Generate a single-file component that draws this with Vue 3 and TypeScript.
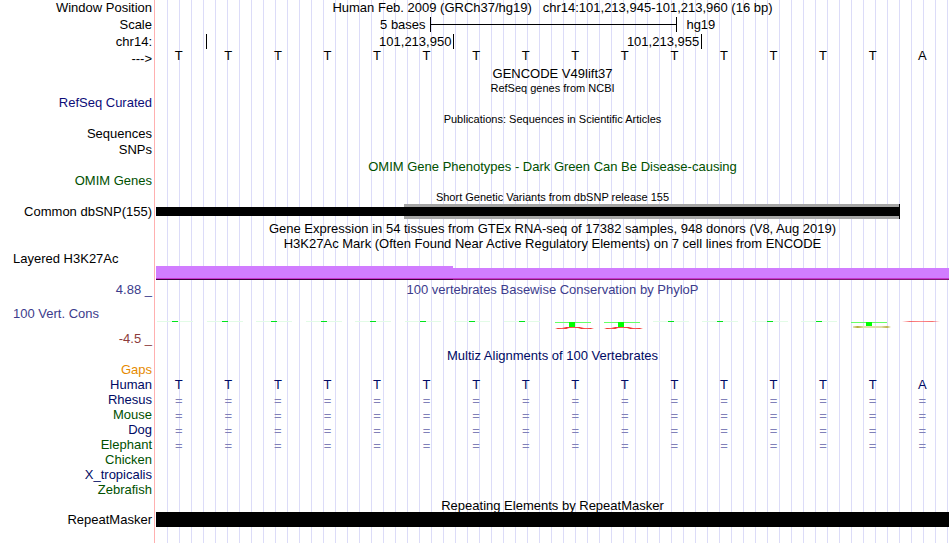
<script setup lang="ts">
type Kind = 'title' | 'label' | 'scale' | 'ruler' | 'bases' | 'snp' | 'layered' | 'phylop' | 'repeat'

interface Row {
  kind: Kind
  height: 14 | 15 | 16 | 17 | 33
  label?: string
  title?: string
  tone?: string
  labelTone?: string
  small?: boolean
  align?: 'low' | 'high'
  left?: boolean
  cells?: string[]
}

const sequence: string[] = [...'TTTTTTTTTTTTTTTA']
const aligned: string[] = sequence.map(() => '=')

const rows: Row[] = [
  { kind: 'title', height: 16, label: 'Window Position', title: 'Human Feb. 2009 (GRCh37/hg19)   chr14:101,213,945-101,213,960 (16 bp)', align: 'high' },
  { kind: 'scale', height: 17, label: 'Scale' },
  { kind: 'ruler', height: 17, label: 'chr14:' },
  { kind: 'bases', height: 16, label: '--->', tone: 'lead', cells: sequence },
  { kind: 'title', height: 15, title: 'GENCODE V49lift37' },
  { kind: 'title', height: 14, title: 'RefSeq genes from NCBI', small: true },
  { kind: 'label', height: 17, label: 'RefSeq Curated', labelTone: 'refseq', align: 'high' },
  { kind: 'title', height: 14, title: 'Publications: Sequences in Scientific Articles', small: true },
  { kind: 'label', height: 15, label: 'Sequences' },
  { kind: 'label', height: 17, label: 'SNPs' },
  { kind: 'title', height: 15, title: 'OMIM Gene Phenotypes - Dark Green Can Be Disease-causing', tone: 'green', align: 'low' },
  { kind: 'label', height: 17, label: 'OMIM Genes', labelTone: 'green', align: 'high' },
  { kind: 'title', height: 14, title: 'Short Genetic Variants from dbSNP release 155', small: true },
  { kind: 'snp', height: 15, label: 'Common dbSNP(155)' },
  { kind: 'title', height: 17, title: 'Gene Expression in 54 tissues from GTEx RNA-seq of 17382 samples, 948 donors (V8, Aug 2019)', align: 'low' },
  { kind: 'title', height: 15, title: 'H3K27Ac Mark (Often Found Near Active Regulatory Elements) on 7 cell lines from ENCODE' },
  { kind: 'label', height: 15, label: 'Layered H3K27Ac', left: true },
  { kind: 'layered', height: 15 },
  { kind: 'title', height: 16, label: '4.88 _', title: '100 vertebrates Basewise Conservation by PhyloP', tone: 'violet', labelTone: 'violet' },
  { kind: 'phylop', height: 33, label: '100 Vert. Cons', labelTone: 'violet', left: true },
  { kind: 'label', height: 17, label: '-4.5 _', labelTone: 'maroon' },
  { kind: 'title', height: 15, title: 'Multiz Alignments of 100 Vertebrates', tone: 'navy', align: 'low' },
  { kind: 'label', height: 15, label: 'Gaps', labelTone: 'orange' },
  { kind: 'bases', height: 15, label: 'Human', labelTone: 'navy', tone: 'navy', cells: sequence },
  { kind: 'bases', height: 15, label: 'Rhesus', labelTone: 'navy', tone: 'match', cells: aligned },
  { kind: 'bases', height: 15, label: 'Mouse', labelTone: 'green', tone: 'match', cells: aligned },
  { kind: 'bases', height: 15, label: 'Dog', labelTone: 'navy', tone: 'match', cells: aligned },
  { kind: 'bases', height: 15, label: 'Elephant', labelTone: 'green', tone: 'match', cells: aligned },
  { kind: 'label', height: 15, label: 'Chicken', labelTone: 'green' },
  { kind: 'label', height: 15, label: 'X_tropicalis', labelTone: 'navy' },
  { kind: 'label', height: 15, label: 'Zebrafish', labelTone: 'green' },
  { kind: 'title', height: 15, title: 'Repeating Elements by RepeatMasker', align: 'low' },
  { kind: 'repeat', height: 15, label: 'RepeatMasker' },
]

const baseWidth = 793 / 16
const baseX = (index: number): number => Math.round(index * baseWidth)
const neutral: number[] = [0, 1, 2, 3, 4, 5, 6, 7, 10, 11, 12, 13]
const negative: number[] = [8, 9]
</script>

<template>
  <main class="browser">
    <section v-for="(row, i) in rows" :key="i" class="row" :class="['h' + row.height, row.align]">
      <div class="label" :class="[row.labelTone, { left: row.left }]">{{ row.label }}</div>

      <div v-if="row.kind === 'title'" class="title" :class="[row.tone, { small: row.small }]">{{ row.title }}</div>

      <div v-else-if="row.kind === 'scale'" class="scale">
        <span class="scale-size">5 bases</span>
        <span class="scale-bar"></span>
        <span class="scale-name">hg19</span>
      </div>

      <div v-else-if="row.kind === 'ruler'" class="ruler">
        <span class="tick"></span>
        <span class="tick">101,213,950</span>
        <span class="tick">101,213,955</span>
      </div>

      <div v-else-if="row.kind === 'bases'" class="bases" :class="row.tone">
        <span v-for="(cell, c) in row.cells" :key="c">{{ cell }}</span>
      </div>

      <svg v-else-if="row.kind === 'snp'" class="plot" viewBox="0 0 793 15" preserveAspectRatio="none" shape-rendering="crispEdges">
        <rect x="248" y="0" width="496" height="15" fill="#a5a5a5" />
        <rect x="0" y="3" width="744" height="9" />
        <rect x="743" y="0" width="1" height="15" />
      </svg>

      <svg v-else-if="row.kind === 'layered'" class="plot" viewBox="0 0 793 15" preserveAspectRatio="none" shape-rendering="crispEdges">
        <path d="M0 0H297V2H793V12H0Z" fill="#d17dff" />
        <rect x="0" y="12" width="793" height="1" fill="#c936cf" />
        <rect x="0" y="13" width="297" height="1" fill="#3f003f" />
        <rect x="297" y="13" width="496" height="1" fill="#7d1c72" />
      </svg>

      <svg v-else-if="row.kind === 'phylop'" class="plot" viewBox="0 0 793 33" preserveAspectRatio="none">
        <defs>
          <linearGradient id="fade-red">
            <stop offset="0" stop-color="#ff4040" stop-opacity="0" />
            <stop offset="0.2" stop-color="#f03030" />
            <stop offset="0.5" stop-color="#ff5a5a" />
            <stop offset="0.8" stop-color="#f03030" />
            <stop offset="1" stop-color="#ff4040" stop-opacity="0" />
          </linearGradient>
          <linearGradient id="fade-olive">
            <stop offset="0" stop-color="#bdb850" stop-opacity="0.4" />
            <stop offset="0.12" stop-color="#b5b03c" />
            <stop offset="0.28" stop-color="#e4e0b0" />
            <stop offset="0.75" stop-color="#e0dca8" />
            <stop offset="0.9" stop-color="#bdb34c" />
            <stop offset="1" stop-color="#bdb850" stop-opacity="0" />
          </linearGradient>
        </defs>
        <g v-for="n in neutral" :key="n" shape-rendering="crispEdges">
          <rect :x="baseX(n) + 1" y="24" width="36" height="1" fill="#e2fbe6" />
          <rect :x="baseX(n) + 16" y="24" width="6" height="1" fill="#00e51a" />
        </g>
        <g v-for="n in negative" :key="n" :transform="`translate(${baseX(n)} 0)`">
          <rect x="2" y="25" width="36" height="1" fill="#66ff66" />
          <rect x="2" y="31" width="14" height="1" fill="url(#fade-red)" />
          <rect x="9" y="30" width="22" height="1" fill="url(#fade-red)" />
          <rect x="25" y="31" width="16" height="1" fill="url(#fade-red)" />
          <rect x="16" y="25" width="6" height="5" fill="#00ff00" />
        </g>
        <rect x="695" y="25" width="36" height="1" fill="#66ff66" />
        <rect x="710" y="25" width="6" height="4" fill="#00ff00" />
        <rect x="697" y="29" width="38" height="2" fill="url(#fade-olive)" />
        <rect x="746" y="24" width="38" height="1" fill="url(#fade-red)" opacity="0.7" />
      </svg>

      <div v-else-if="row.kind === 'repeat'" class="plot solid"></div>
    </section>
  </main>
</template>

<style>
body {
  margin: 0;
  background: #fff;
}
</style>

<style scoped>
.browser {
  box-sizing: border-box;
  min-height: 100vh;
  overflow: hidden;
  color: #000;
  font: 13px/15px "Liberation Sans", Arial, Helvetica, sans-serif;
  background:
    linear-gradient(#ffb0b0, #ffb0b0) 154px 0 / 1px 100% no-repeat,
    repeating-linear-gradient(to right, transparent 0 11px, #dcdcf8 11px 12px) 156px 0 / 100% 100% no-repeat;
}

.row {
  display: grid;
  grid-template-columns: 156px minmax(0, 1fr);
  align-items: center;
  box-sizing: border-box;
  padding-right: 1px;
  white-space: pre;
}

.h14 { height: 14px; }
.h15 { height: 15px; }
.h16 { height: 16px; }
.h17 { height: 17px; }
.h33 { height: 33px; }
.low { padding-top: 1px; }
.low.h17 { padding-top: 2px; }
.high { align-items: start; }

.label {
  padding-right: 4px;
  text-align: right;
}

.label.left {
  padding-left: 13px;
  text-align: left;
}

.title { text-align: center; }
.small { font-size: 11px; }

.refseq { color: #0c0c78; }
.green { color: #005000; }
.violet { color: #3c3c8c; }
.maroon { color: #8c3c3c; }
.navy { color: #000a64; }
.orange { color: #e68a00; }

.scale {
  display: grid;
  grid-template-columns: 11fr 10fr 11fr;
  align-items: center;
  margin: 0 -1px 0 1px;
}

.scale-size {
  padding-right: 4px;
  text-align: right;
}

.scale-bar {
  height: 15px;
  border: solid #000;
  border-width: 0 1px;
  background: linear-gradient(#000, #000) center / 100% 1px no-repeat;
}

.scale-name { padding-left: 9px; }

.ruler {
  display: grid;
  grid-template-columns: 1fr 5fr 5fr 5fr;
  margin: 0 -1px 0 1px;
}

.tick {
  height: 15px;
  padding-right: 2px;
  border-right: 1px solid #000;
  text-align: right;
}

.bases {
  display: grid;
  grid-template-columns: repeat(16, 1fr);
  margin: 0 2px 0 -2px;
  text-align: center;
}

.lead {
  align-self: start;
  line-height: 12px;
}

.match {
  margin-top: 1px;
  margin-bottom: -1px;
  color: #8080b8;
}

.plot {
  display: block;
  width: 100%;
  height: 100%;
}

.solid { background: #000; }
</style>
